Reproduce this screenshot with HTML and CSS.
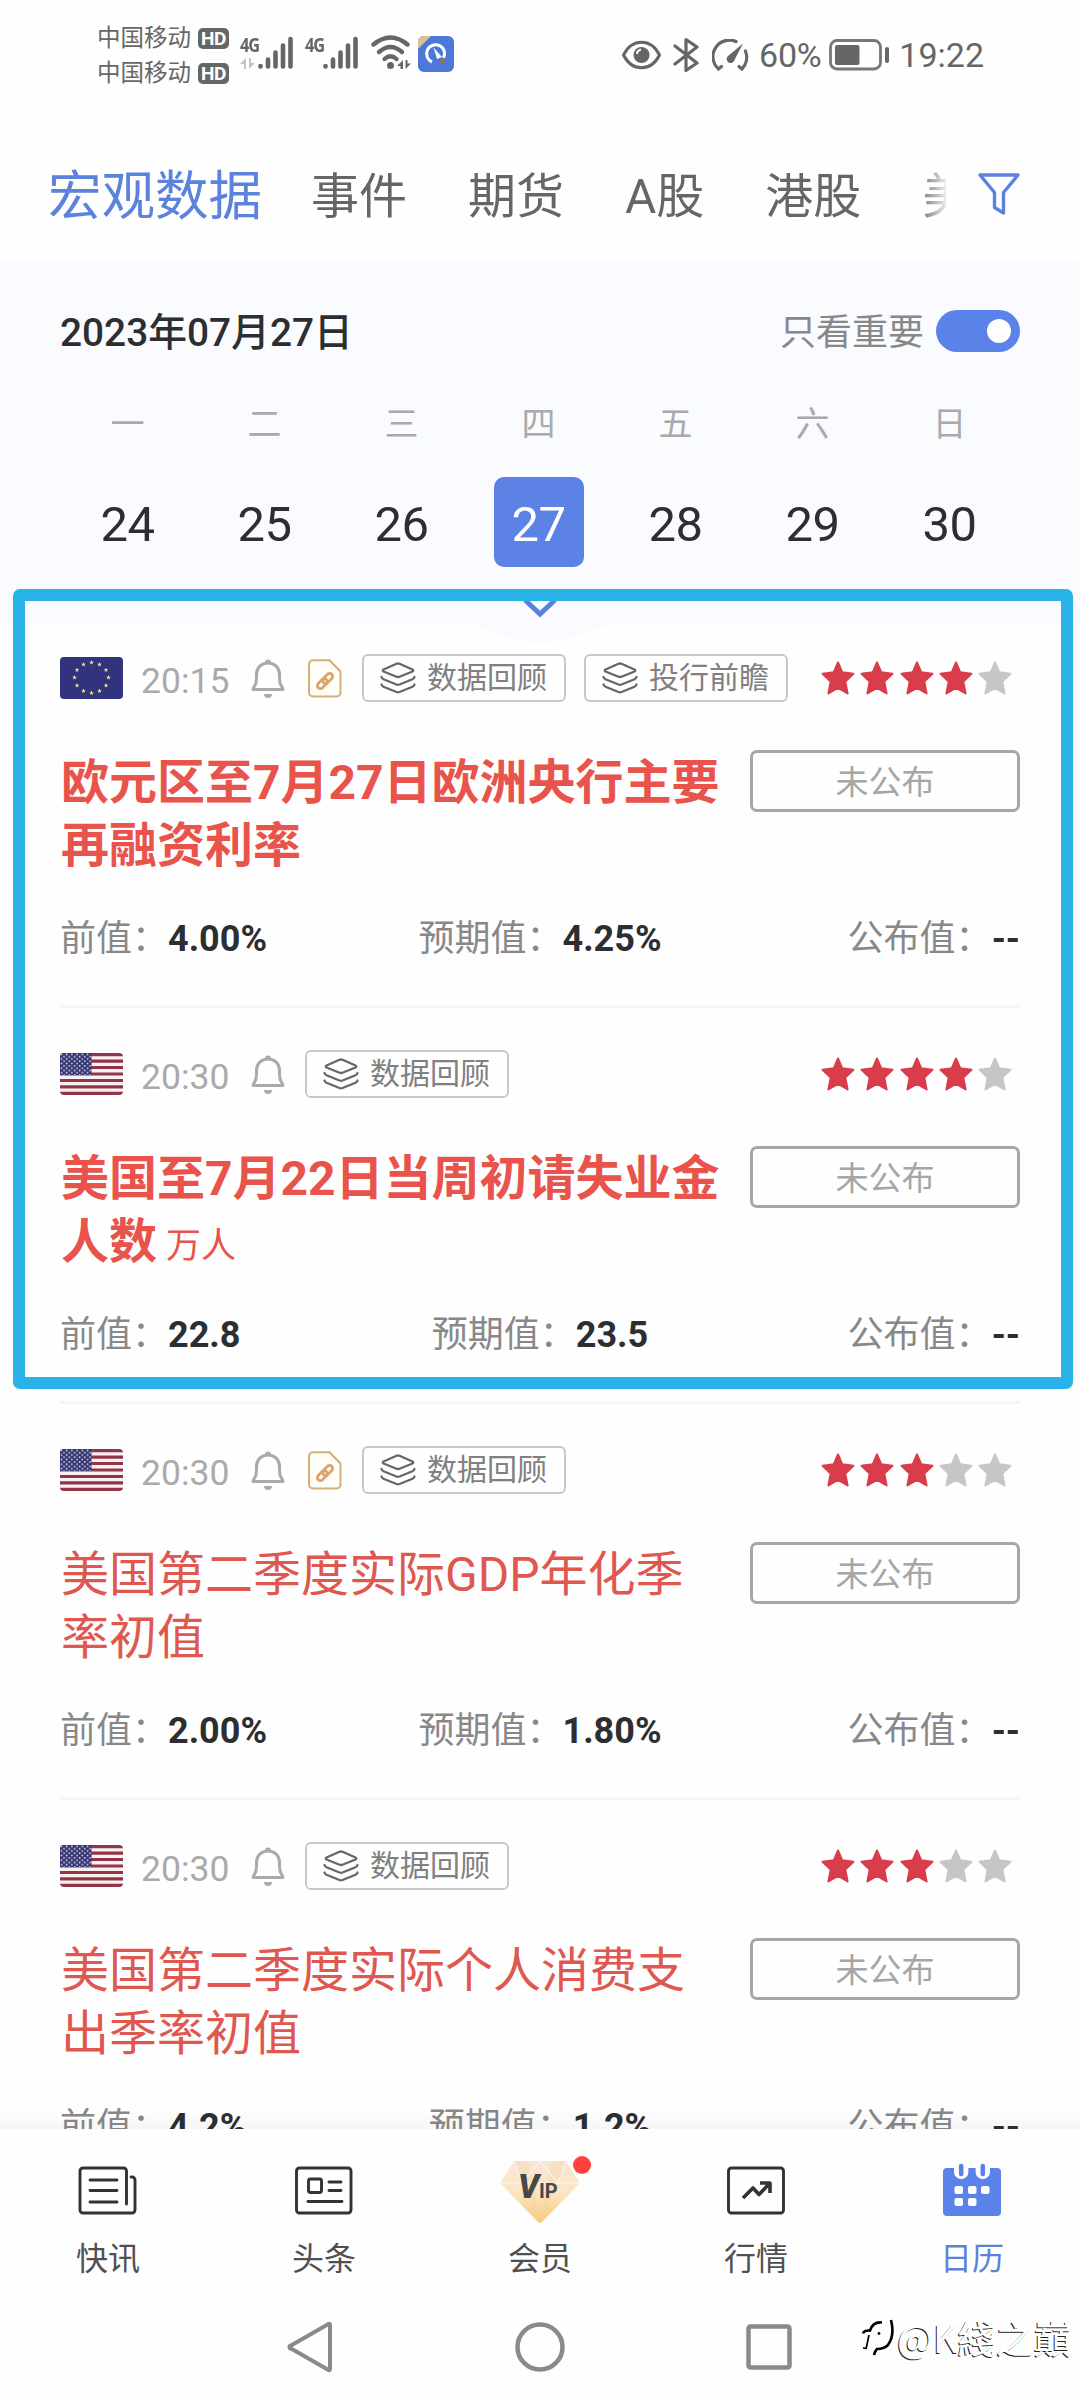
FILE: index.html
```
<!DOCTYPE html>
<html lang="zh-CN">
<head>
<meta charset="utf-8">
<title>财经日历</title>
<link rel="stylesheet" href="styles.css">
</head>
<body>
<svg class="defs" width="0" height="0">
  <symbol id="bell" viewBox="0 0 34 39">
    <path d="M2 30.500C2 28 5.500 27 5.500 20V15.500C5.500 8.500 10.500 4 17 4S28.500 8.500 28.500 15.500V20C28.500 27 32 28 32 30.500Z" fill="none" stroke="#aaa" stroke-width="3" stroke-linejoin="round"/>
    <path d="M14 3.500a3 3 0 0 1 6 0z" fill="#aaa"/>
    <path d="M13 35h8a4 4 0 0 1-8 0z" fill="#aaa"/>
  </symbol>
  <symbol id="doc" viewBox="0 0 34 39">
    <path d="M5 1.200H21.500L32.500 12.500V33.500a4 4 0 0 1-4 4H5a4 4 0 0 1-4-4V5.200a4 4 0 0 1 4-4z" fill="#fffdf8" stroke="#d3b078" stroke-width="2"/>
    <g fill="none" stroke="#dba36c" stroke-width="2.800" transform="rotate(-45 17 22)">
      <rect x="7.500" y="19" width="11.500" height="6" rx="3"/>
      <rect x="15" y="19" width="11.500" height="6" rx="3"/>
    </g>
  </symbol>
  <symbol id="layers" viewBox="0 0 36 32">
    <g fill="none" stroke="#666" stroke-width="2.300" stroke-linejoin="round" stroke-linecap="round">
      <path d="M16.500 1.800Q18 1.200 19.500 1.800L32.500 7.500Q34 8.500 32.500 9.500L19.500 14.700Q18 15.300 16.500 14.700L3.500 9.500Q2 8.500 3.500 7.500Z"/>
      <path d="M1.500 15Q2 16.500 3.500 17.200L16.500 22.500Q18 23.100 19.500 22.500L32.500 17.200Q34 16.500 34.500 15"/>
      <path d="M1.500 22.500Q2 24 3.500 24.700L16.500 30Q18 30.600 19.500 30L32.500 24.700Q34 24 34.500 22.500"/>
    </g>
  </symbol>
  <symbol id="star" viewBox="0 0 34 34">
    <path d="M17 1.500L21.300 11.300L32.500 12.800L24.300 20.500L26.600 32.500L17 27L7.400 32.500L9.700 20.500L1.500 12.800L12.700 11.300Z" fill="currentColor" stroke="currentColor" stroke-width="2" stroke-linejoin="round"/>
  </symbol>
  <symbol id="ustar" viewBox="-5 -5 10 10">
    <path d="M0-5L1.200-1.600H4.800L1.900.6L3 4L0 1.900L-3 4L-1.900.6L-4.800-1.600H-1.200Z" fill="currentColor"/>
  </symbol>
  <pattern id="cantonStars" width="5.200" height="4.600" patternUnits="userSpaceOnUse">
    <circle cx="1.500" cy="1.300" r=".9" fill="#d9dbf0"/><circle cx="4.100" cy="3.600" r=".9" fill="#d9dbf0"/>
  </pattern>
  <symbol id="us" viewBox="0 0 63 42">
    <rect width="63" height="42" fill="#faf0f2"/>
    <path d="M0 1.600H63M0 8.100H63M0 14.500H63M0 21H63M0 27.500H63M0 33.900H63M0 40.400H63" stroke="#8f3748" stroke-width="3.200"/>
    <rect width="31.500" height="22" fill="#34336f"/><rect width="31.500" height="22" fill="url(#cantonStars)"/>
  </symbol>
  <symbol id="eu" viewBox="0 0 63 42">
    <rect width="63" height="42" fill="#32337f"/>
    <g color="#f3e88c">
      <use href="#ustar" x="29" y="3" width="5" height="5"/><use href="#ustar" x="37" y="5" width="5" height="5"/>
      <use href="#ustar" x="43.500" y="10.500" width="5" height="5"/><use href="#ustar" x="46" y="18" width="5" height="5"/>
      <use href="#ustar" x="43.500" y="26" width="5" height="5"/><use href="#ustar" x="37" y="31.500" width="5" height="5"/>
      <use href="#ustar" x="29" y="33.500" width="5" height="5"/><use href="#ustar" x="21" y="31.500" width="5" height="5"/>
      <use href="#ustar" x="14.500" y="26" width="5" height="5"/><use href="#ustar" x="12" y="18" width="5" height="5"/>
      <use href="#ustar" x="14.500" y="10.500" width="5" height="5"/><use href="#ustar" x="21" y="5" width="5" height="5"/>
    </g>
  </symbol>
  <symbol id="signal" viewBox="0 0 36 36">
    <path d="M2.500 31V31.500M10 24.500V31.500M17.500 17.500V31.500M25 10.500V31.500M32.500 4V31.500" stroke="#666" stroke-width="4.600" stroke-linecap="round"/>
  </symbol>
</svg>

<div class="screen">
  <header class="status">
    <div class="carriers">
      <div class="carrier"><span>中国移动</span><b class="hd">HD</b></div>
      <div class="carrier"><span>中国移动</span><b class="hd">HD</b></div>
    </div>
    <div class="sim">
      <div class="net"><b>4G</b>
        <svg width="16" height="13" viewBox="0 0 16 13"><path d="M6 12V1L0 7H4V12ZM9 1V12L15 6H11V1Z" fill="#c4c4c4"/></svg>
      </div>
      <svg width="36" height="36"><use href="#signal"/></svg>
    </div>
    <div class="sim second">
      <div class="net"><b>4G</b></div>
      <svg width="36" height="36"><use href="#signal"/></svg>
    </div>
    <svg class="wifi" width="41" height="36" viewBox="0 0 41 36">
      <g fill="none" stroke="#666" stroke-width="4.400" stroke-linecap="round">
        <path d="M2.500 9.500Q19.500-4.500 36.500 9.500"/><path d="M8 17Q19.500 7 31 17"/><path d="M13.500 24Q19.500 18.500 25.500 24"/>
      </g>
      <circle cx="19.500" cy="30.500" r="3.500" fill="#666"/>
      <path d="M32 34V25L26 31H29.500V34ZM34.500 25V34L40 28.500H36.500V25Z" fill="#666"/>
    </svg>
    <svg class="app" width="36" height="36" viewBox="0 0 36 36">
      <rect width="36" height="36" rx="6" fill="#4c78d8"/>
      <path d="M0 13V6Q0 0 6 0H13Z" fill="#dcc193"/>
      <path d="M14 26A9 9 0 1 1 25.500 22" fill="none" stroke="#fff" stroke-width="3"/>
      <path d="M22 22L28 22L28 28L22 27Z" fill="#77777f"/><path d="M15.500 11.500L24 21L19 23Z" fill="#fff"/>
    </svg>
    <div class="right">
      <svg class="eye" width="39" height="30" viewBox="0 0 39 30">
        <path d="M1.500 15C10-2 29-2 37.500 15C29 32 10 32 1.500 15Z" fill="none" stroke="#666" stroke-width="3"/>
        <circle cx="19.500" cy="15" r="8" fill="#666"/><path d="M15 14a5 5 0 0 1 4-4.500" stroke="#fff" stroke-width="2" fill="none"/>
      </svg>
      <svg class="bt" width="27" height="36" viewBox="0 0 27 36"><path d="M2 9L24 26L13 33.500V2.500L24 10L2 27" fill="none" stroke="#666" stroke-width="3.200" stroke-linecap="round" stroke-linejoin="round"/></svg>
      <svg class="gauge" width="37" height="33" viewBox="0 0 37 33">
        <g fill="none" stroke="#666" stroke-width="3.200" stroke-linecap="round"><path d="M24 2.500A16.500 16.500 0 0 0 6.500 30L9.500 27.500"/><path d="M33.500 12A17 17 0 0 1 30 30L27 27.500"/></g>
        <path d="M31 4.500L22.500 21a4 4 0 1 1-6.500-4Z" fill="#666"/>
      </svg>
      <span class="pct">60%</span>
      <svg class="bat" width="61" height="32" viewBox="0 0 61 32">
        <rect x="1.500" y="1.500" width="50" height="28.500" rx="6.500" fill="none" stroke="#777" stroke-width="2.800"/>
        <rect x="6" y="6" width="24.500" height="20" rx="2" fill="#666"/><rect x="56" y="8" width="4" height="16" rx="2" fill="#666"/>
      </svg>
      <span class="clock">19:22</span>
    </div>
  </header>

  <nav class="tabs">
    <div class="tab-strip">
      <a class="tab active">宏观数据</a><a class="tab">事件</a><a class="tab">期货</a><a class="tab">A股</a><a class="tab">港股</a><a class="tab">美</a>
    </div>
    <svg class="filter" width="42" height="42" viewBox="0 0 42 42"><path d="M2 2H40L25.500 19.500V40L16.500 34.500V19.500Z" fill="none" stroke="#5b82e3" stroke-width="3.400" stroke-linejoin="round"/></svg>
  </nav>

  <section class="calendar">
    <div class="date-row">
      <h1>2023年07月27日</h1>
      <span class="only">只看重要</span>
      <span class="toggle"></span>
    </div>
    <div class="week names"><span>一</span><span>二</span><span>三</span><span>四</span><span>五</span><span>六</span><span>日</span></div>
    <div class="week days"><span>24</span><span>25</span><span>26</span><span class="sel">27</span><span>28</span><span>29</span><span>30</span></div>
    <svg class="pull" width="180" height="48" viewBox="0 0 180 48">
      <path d="M0 27C45 27 50 47 90 47S135 27 180 27Z" fill="#fafbff"/>
      <path d="M75 4L90 18L105 4" fill="none" stroke="#5b82da" stroke-width="5"/>
    </svg>
  </section>

  <main class="list">
    <article class="item key">
      <div class="meta">
        <svg class="flag" width="63" height="42"><use href="#eu"/></svg><time>20:15</time>
        <svg class="bell" width="34" height="39"><use href="#bell"/></svg>
        <svg class="doc" width="34" height="39"><use href="#doc"/></svg>
        <span class="tag"><svg width="36" height="32"><use href="#layers"/></svg>数据回顾</span>
        <span class="tag"><svg width="36" height="32"><use href="#layers"/></svg>投行前瞻</span>
        <span class="stars"><svg><use href="#star"/></svg><svg><use href="#star"/></svg><svg><use href="#star"/></svg><svg><use href="#star"/></svg><svg class="off"><use href="#star"/></svg></span>
      </div>
      <div class="body"><h2>欧元区至7月27日欧洲央行主要再融资利率</h2><span class="state">未公布</span></div>
      <div class="values"><span>前值：<b>4.00%</b></span><span>预期值：<b>4.25%</b></span><span>公布值：<b>--</b></span></div>
    </article>
    <article class="item key">
      <div class="meta">
        <svg class="flag" width="63" height="42"><use href="#us"/></svg><time>20:30</time>
        <svg class="bell" width="34" height="39"><use href="#bell"/></svg>
        <span class="tag"><svg width="36" height="32"><use href="#layers"/></svg>数据回顾</span>
        <span class="stars"><svg><use href="#star"/></svg><svg><use href="#star"/></svg><svg><use href="#star"/></svg><svg><use href="#star"/></svg><svg class="off"><use href="#star"/></svg></span>
      </div>
      <div class="body"><h2>美国至7月22日当周初请失业金人数<small>万人</small></h2><span class="state">未公布</span></div>
      <div class="values"><span>前值：<b>22.8</b></span><span>预期值：<b>23.5</b></span><span>公布值：<b>--</b></span></div>
    </article>
    <article class="item">
      <div class="meta">
        <svg class="flag" width="63" height="42"><use href="#us"/></svg><time>20:30</time>
        <svg class="bell" width="34" height="39"><use href="#bell"/></svg>
        <svg class="doc" width="34" height="39"><use href="#doc"/></svg>
        <span class="tag"><svg width="36" height="32"><use href="#layers"/></svg>数据回顾</span>
        <span class="stars"><svg><use href="#star"/></svg><svg><use href="#star"/></svg><svg><use href="#star"/></svg><svg class="off"><use href="#star"/></svg><svg class="off"><use href="#star"/></svg></span>
      </div>
      <div class="body"><h2>美国第二季度实际GDP年化季率初值</h2><span class="state">未公布</span></div>
      <div class="values"><span>前值：<b>2.00%</b></span><span>预期值：<b>1.80%</b></span><span>公布值：<b>--</b></span></div>
    </article>
    <article class="item">
      <div class="meta">
        <svg class="flag" width="63" height="42"><use href="#us"/></svg><time>20:30</time>
        <svg class="bell" width="34" height="39"><use href="#bell"/></svg>
        <span class="tag"><svg width="36" height="32"><use href="#layers"/></svg>数据回顾</span>
        <span class="stars"><svg><use href="#star"/></svg><svg><use href="#star"/></svg><svg><use href="#star"/></svg><svg class="off"><use href="#star"/></svg><svg class="off"><use href="#star"/></svg></span>
      </div>
      <div class="body"><h2>美国第二季度实际个人消费支出季率初值</h2><span class="state">未公布</span></div>
      <div class="values"><span>前值：<b>4.2%</b></span><span>预期值：<b>1.2%</b></span><span>公布值：<b>--</b></span></div>
    </article>
  </main>

  <nav class="bottom">
    <a><svg width="80" height="66" viewBox="0 0 80 66">
      <g fill="none" stroke="#333" stroke-width="2.900" stroke-linecap="round" stroke-linejoin="round">
        <path d="M58.500 47V14a3 3 0 0 0-3-3H15a3 3 0 0 0-3 3V53a3 3 0 0 0 3 3H64a3 3 0 0 0 3-3V23a3 3 0 0 0-3-3H63M22 23H49M22 33.500H49M22 45H49"/>
      </g></svg><span>快讯</span></a>
    <a><svg width="80" height="66" viewBox="0 0 80 66">
      <g fill="none" stroke="#333" stroke-width="2.900" stroke-linecap="round" stroke-linejoin="round">
        <rect x="12.500" y="11" width="54.500" height="45" rx="3"/><rect x="24.500" y="22" width="13" height="13.500" rx="2"/>
        <path d="M45 25H57M45 33.500H57M24 44.500H58"/>
      </g></svg><span>头条</span></a>
    <a><svg width="80" height="66" viewBox="0 0 80 66">
      <defs><linearGradient id="gem" x1="0" y1="0" x2="0" y2="1"><stop offset="0" stop-color="#f7e6d8"/><stop offset=".5" stop-color="#fbe6c3"/><stop offset="1" stop-color="#f8ca77"/></linearGradient></defs>
      <path d="M14 4H66L79 25Q79 27 78 28L42 65Q40 67 38 65L2 28Q0 26 1 25Z" fill="url(#gem)"/>
      <path d="M14 4L22 26L40 66L33 26L28 4ZM66 4L58 26L40 66L47 26L52 4Z" fill="#f1d3a6" opacity=".35"/>
      <path d="M1 26H79M14 4L22 26L40 4L58 26L66 4" fill="none" stroke="#fff" stroke-opacity=".45" stroke-width="1.500"/>
      <text x="18" y="41" class="gem-v">V</text><text x="39" y="41" class="gem-ip">IP</text>
      </svg><i class="dot"></i><span>会员</span></a>
    <a><svg width="80" height="66" viewBox="0 0 80 66">
      <g fill="none" stroke="#333" stroke-width="2.900" stroke-linejoin="round">
        <rect x="12.500" y="11" width="55" height="45" rx="3"/><path d="M27 41L37 31L43 37.500L54 26M44 26H54V36" stroke-width="3.600"/>
      </g></svg><span>行情</span></a>
    <a class="on"><svg width="80" height="66" viewBox="0 0 80 66">
      <path d="M16 11H22V15a7.200 7.200 0 0 0 14.400 0V11H43.600V15a7.200 7.200 0 0 0 14.400 0V11H65a4 4 0 0 1 4 4V55a4 4 0 0 1-4 4H15a4 4 0 0 1-4-4V15a4 4 0 0 1 4-4Z" fill="#5b82e8"/>
      <path d="M29.200 9V17M50.800 9V17" stroke="#5b82e8" stroke-width="4.600" stroke-linecap="round"/>
      <g fill="#fff"><rect x="22.500" y="29" width="8.500" height="8" rx="2"/><rect x="36" y="29" width="8.500" height="8" rx="2"/><rect x="49" y="29" width="8.500" height="8" rx="2"/><rect x="22.500" y="41" width="8.500" height="8" rx="2"/><rect x="36" y="41" width="8.500" height="8" rx="2"/></g>
      </svg><span>日历</span></a>
  </nav>

  <footer class="system">
    <svg width="54" height="54" viewBox="0 0 54 54"><path d="M46 5V49a1 1 0 0 1-1.500 1L7 28.500a1.500 1.500 0 0 1 0-3L44.500 4a1 1 0 0 1 1.500 1Z" fill="none" stroke="#8a8a8a" stroke-width="4"/></svg>
    <svg width="54" height="54" viewBox="0 0 54 54"><circle cx="27" cy="27" r="22.500" fill="none" stroke="#8a8a8a" stroke-width="4.500"/></svg>
    <svg width="54" height="54" viewBox="0 0 54 54"><rect x="6.500" y="6.500" width="41" height="41" rx="2" fill="none" stroke="#8a8a8a" stroke-width="4.500"/></svg>
  </footer>

  <div class="highlight"></div>
  <div class="watermark">
    <svg width="36" height="40" viewBox="0 0 36 40"><g fill="none" stroke="#000" stroke-width="2.600"><path d="M3 16.500Q4 13 10 13.500Q13 4.500 22 5.500"/><path d="M31 3Q35 18 28 28Q24 32 17 32Q15 34 14 38"/><path d="M9 18L6 32M3 31L6 31.500" stroke-width="1.700"/></g><circle cx="19" cy="16.500" r="1.400"/></svg>
    <span>@K綫之巔</span>
  </div>
</div>
</body>
</html>
```
FILE: styles.css
```
* { box-sizing: border-box; }
body { margin: 0; background: #fff; font-family: Roboto, "Noto Sans CJK SC", sans-serif; color: #2c2e30; }
h1, h2 { margin: 0; }
svg { display: block; flex: none; }
.defs { position: absolute; }
.screen { position: relative; width: 1080px; height: 2400px; display: flex; flex-direction: column; overflow: hidden; background: #fefefe; }

/* status bar */
.status { height: 110px; flex: none; display: flex; align-items: flex-start; padding: 20px 96px 0 97px; color: #666; }
.carriers { width: 143px; padding-top: 1px; }
.carrier { height: 35px; display: flex; align-items: center; font-size: 23.5px; line-height: 35px; }
.hd { width: 31px; height: 21px; margin-left: 7px; border-radius: 5px; background: #666; color: #fff; font-size: 19px; line-height: 22px; text-align: center; letter-spacing: -0.5px; }
.sim { display: flex; padding-top: 15px; }
.sim.second { margin-left: 11px; }
.net { width: 18px; height: 36px; display: flex; flex-direction: column; justify-content: space-between; white-space: nowrap; }
.net b { font: 700 20px/20px "Open Sans", sans-serif; letter-spacing: -1.5px; transform: scaleX(.82); transform-origin: left; }
.net svg { margin-bottom: 1px; }
.wifi { margin: 15px 0 0 12px; }
.app { margin: 16px 0 0 6px; }
.right { flex: 1; display: flex; align-items: center; height: 70px; justify-content: flex-end; font-size: 34px; }
.bt { margin-left: 12px; }
.gauge { margin-left: 12px; }
.pct { margin-left: 10px; letter-spacing: -0.3px; }
.bat { margin-left: 8px; }
.clock { margin-left: 9px; }

/* category tabs */
.tabs { height: 151px; flex: none; display: flex; padding: 45px 60px 0 48px; }
.tab-strip { width: 898px; display: flex; overflow: hidden; align-items: center; height: 84px; gap: 61px; white-space: nowrap; -webkit-mask-image: linear-gradient(90deg, #000 870px, transparent 902px); mask-image: linear-gradient(90deg, #000 870px, transparent 902px); }
.tab { flex: none; font-size: 48px; line-height: 84px; color: #666; }
.tab.active { font-size: 53.5px; color: #5b82dc; margin-right: -12px; }
.filter { margin: 18px 0 0 32px; }

/* calendar */
.calendar { position: relative; height: 362px; flex: none; background: #fafbff; padding: 43px 60px 0 59px; }
.date-row { display: flex; align-items: center; height: 54px; }
.date-row h1 { flex: 1; font-size: 38.800px; font-weight: 500; line-height: 54px; padding: 4px 0 0 1px; }
.only { font-size: 36px; color: #888; line-height: 54px; padding-top: 4px; }
.toggle { width: 84px; height: 42px; margin-left: 12px; border-radius: 21px; background: #5b82e8; display: flex; justify-content: flex-end; padding: 9px; }
.toggle::after { content: ""; width: 24px; height: 24px; border-radius: 50%; background: #fff; }
.week { display: grid; grid-template-columns: repeat(7, 137px); justify-items: center; }
.names { height: 50px; margin-top: 41px; font-size: 34px; line-height: 50px; color: #aaa; }
.days { margin-top: 28px; font-size: 49px; line-height: 96px; letter-spacing: -0.5px; }
.days span { width: 90px; height: 90px; border-radius: 10px; text-align: center; }
.days .sel { background: #5b82e4; color: #fff; }
.pull { position: absolute; left: 450px; top: 335px; z-index: 1; }

/* event list */
.list { flex: 1; overflow: hidden; padding: 0 60px; position: relative; }
.list::after { content: ""; position: absolute; left: 0; right: 0; bottom: 0; height: 20px; background: linear-gradient(rgba(0,0,0,0), rgba(0,0,0,.03)); }
.item { height: 396px; padding-top: 42px; border-bottom: 3px solid #f5f5f5; }
.item:first-child { height: 385px; padding-top: 31px; }
.meta { display: flex; align-items: center; height: 48px; }
.flag { border-radius: 4px; margin-top: -1px; }
time { width: 89px; margin-left: 18px; padding-top: 6px; font-size: 35.500px; line-height: 48px; color: #aaa; }
.bell { margin-left: 21px; }
.doc { margin-left: 23px; }
.tag { display: flex; align-items: center; width: 204px; height: 48px; margin-left: 20px; padding-left: 16px; gap: 11px; border: 2px solid #c8c8c8; border-radius: 6px; font-size: 30px; line-height: 46px; color: #808080; white-space: nowrap; }
.doc + .tag { margin-left: 20px; }
.tag + .tag { margin-left: 18px; }
.stars { display: flex; gap: 5.200px; margin-left: auto; margin-right: 8px; color: #d93c4b; }
.stars svg { width: 34px; height: 34px; }
.stars .off { color: #c6c6c6; }
.body { display: flex; justify-content: space-between; margin-top: 48px; height: 126px; }
.body h2 { width: 664px; padding-top: 1px; font-size: 48px; line-height: 63px; font-weight: 400; color: #df5850; padding-left: 1px; }
.key h2 { font-weight: 700; color: #e8544b; }
.body small { font-size: 35px; font-weight: 400; line-height: 40px; margin-left: 9px; }
.state { width: 270px; height: 62px; border: 3px solid #a6a6a6; border-radius: 7px; font-size: 33px; line-height: 59px; text-align: center; color: #a6a6a6; }
.values { display: grid; grid-template-columns: 1fr auto 1fr; margin-top: 42px; font-size: 36px; line-height: 42px; height: 42px; color: #888; white-space: nowrap; }
.values span:last-child { text-align: right; }
.values b { color: #2c2e30; }

/* app navigation */
.bottom { height: 169px; flex: none; display: grid; grid-template-columns: repeat(5, 216px); padding-top: 28px; background: #fefefe; }
.bottom a { position: relative; display: flex; flex-direction: column; align-items: center; font-size: 32px; line-height: 46px; color: #505050; }
.bottom span { margin-top: 13px; }
.bottom .on { color: #5b82d8; }
.dot { position: absolute; left: 141px; top: -1px; width: 18px; height: 18px; border-radius: 50%; background: #ff423c; }
.gem-v { font: italic 900 33px Roboto, sans-serif; fill: #484848; }
.gem-ip { font: 700 20px Roboto, sans-serif; fill: #484848; }

/* system navigation */
.system { height: 102px; flex: none; display: flex; justify-content: center; gap: 175px; padding-top: 22px; }

.highlight { position: absolute; left: 13px; top: 589px; width: 1060px; height: 800px; border: 12px solid #29b3e8; border-radius: 7px; z-index: 2; }
.watermark { position: absolute; left: 860px; top: 2315px; display: flex; align-items: center; gap: 1px; font-family: "Noto Sans CJK TC", sans-serif; font-size: 38px; font-weight: 400; line-height: 44px; color: #fff; text-shadow: -1px 1px 0 #222; white-space: nowrap; }
```
